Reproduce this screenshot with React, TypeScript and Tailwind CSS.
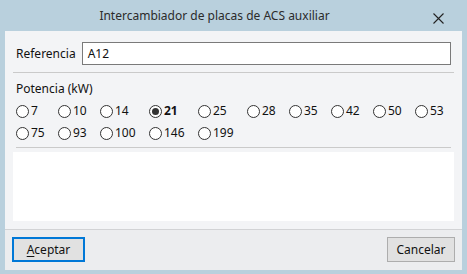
import React from 'react'

const values = ['7', '10', '14', '21', '25', '28', '35', '42', '50', '53', '75', '93', '100', '146', '199']
const selected = '21'

function Radio({ label, checked }: { label: string; checked: boolean }) {
  return (
    <div className="flex items-center gap-[2px] h-[22px]">
      <span className="w-[13px] h-[13px] rounded-full border border-[#333] bg-white flex items-center justify-center shrink-0">
        {checked && <span className="w-[7px] h-[7px] rounded-full bg-[#333]" />}
      </span>
      <span className={checked ? 'font-bold text-[#111]' : 'text-[#111]'}>{label}</span>
    </div>
  )
}

export default function App() {
  return (
    <div
      className="w-[467px] h-[274px] bg-[#b9d0dd] flex flex-col text-[12px] text-[#111]"
      style={{ fontFamily: '"Noto Sans", "Open Sans", sans-serif' }}
    >
      {/* Title bar */}
      <div className="h-[31px] shrink-0 flex items-center relative">
        <span className="w-full text-center text-[#2b2b2b] pt-[1px] pr-[38px]">Intercambiador de placas de ACS auxiliar</span>
        <svg className="absolute left-[433px] top-[13px]" width="11" height="11" viewBox="0 0 11 11">
          <path d="M0.5 0.5 L10.5 10.5 M10.5 0.5 L0.5 10.5" stroke="#222" strokeWidth="1.1" />
        </svg>
      </div>

      {/* Client */}
      <div className="mx-[5px] h-[239px] bg-[#f3f4f6] flex flex-col">
        <div className="flex items-center h-[23px] mt-[11px] pl-[11px] pr-[11px] gap-[6px]">
          <span>Referencia</span>
          <div className="flex-1 h-[23px] border border-[#7a7a7a] bg-white flex items-center pl-[5px]">A12</div>
        </div>
        <div className="mx-[8px] mt-[7px] h-px bg-[#cacaca]" />

        <div className="pl-[11px] mt-[8px] leading-[16px]">Potencia (kW)</div>
        <div className="pl-[11px] mt-[3px] grid grid-cols-[42px_42px_49px_49px_49px_42px_42px_42px_42px_auto]">
          {values.map(v => (
            <Radio key={v} label={v} checked={v === selected} />
          ))}
        </div>
        <div className="mx-[11px] mt-[3px] h-px bg-[#cacaca]" />

        <div className="mx-[8px] mt-[4px] h-[69px] bg-white" />

        <div className="mt-[8px] h-px bg-[#d2d3d5]" />
        <div className="flex-1 bg-[#ecedef] flex items-start justify-between px-[7px] pt-[7px]">
          <button className="w-[73px] h-[25px] border-2 border-[#0078d7] bg-[#e1e1e1] flex items-center justify-center">
            <span>
              <span className="underline underline-offset-2">A</span>ceptar
            </span>
          </button>
          <button className="w-[68px] h-[25px] border border-[#adadad] bg-[#e1e1e1] flex items-center justify-center">
            Cancelar
          </button>
        </div>
      </div>
    </div>
  )
}
